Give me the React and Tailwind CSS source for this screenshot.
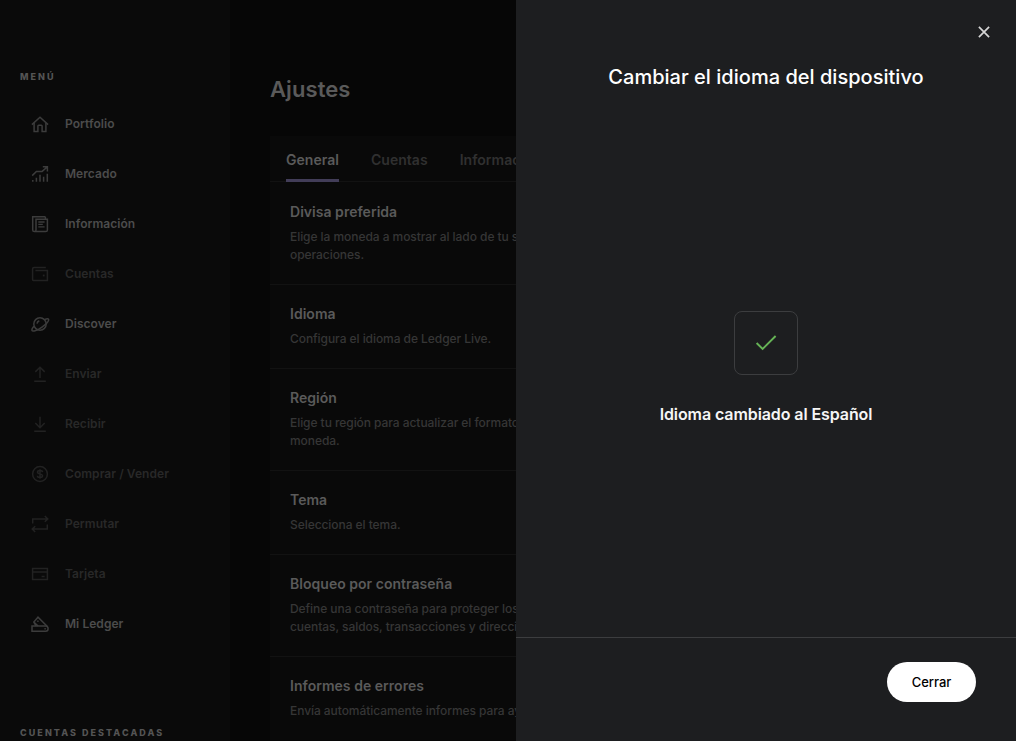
import React from "react";

function Icon({ children }) {
  return (
    <svg
      width="24"
      height="24"
      viewBox="0 0 24 24"
      fill="none"
      stroke="currentColor"
      strokeWidth="1.5"
      className="shrink-0"
    >
      {children}
    </svg>
  );
}

const icons = {
  home: (
    <>
      <path d="M3.9 12.6 12 5.3l8.1 7.3" />
      <path d="M6.1 10.8v8.6h3.8v-5.3q0-.9.9-.9h2.4q.9 0 .9.9v5.3h3.8v-8.6" />
    </>
  ),
  market: (
    <>
      <path d="M4.2 13.6 8.4 9.4h5.7L19.2 5M14.8 4.8h4.6v4.6" />
      <path d="M4.8 18v1.8M8.4 15.8v4M12 12.8v7M15.6 14.8v5M19.3 11.8v8" />
    </>
  ),
  news: (
    <>
      <path d="M17.4 4.8H4.7v13.1q0 1.6 1.7 1.6h11.3q1.7 0 1.7-1.6V7.3H8v10.6q0 1.4-1.4 1.6M17.4 4.8v2.5" />
      <path d="M10.3 10h6.3M10.3 12.4h4.5M10.3 14.8h6.3" strokeWidth="1.3" />
    </>
  ),
  wallet: (
    <>
      <path d="M17.8 5.6H6q-1.4 0-1.4 1.4v10.8q0 .6.6.6h14.2V8.6H7.4" />
      <path d="M14.8 13.5h1.8" strokeWidth="1.8" />
    </>
  ),
  planet: (
    <>
      <circle cx="12" cy="12" r="6.2" />
      <path d="M16.6 7.6c2.4-1.1 4.1-1.1 4.1.2 0 1.6-2.9 4.6-6.7 7.3-4 2.9-9.4 5.1-10 3.4-.4-1 .5-2.6 1.9-4.2" />
      <path d="M9 11.6q.2-2.1 2.3-2.9" />
    </>
  ),
  send: <path d="M12 16V5.3M7.3 9.9 12 5.2l4.7 4.7M6.2 19.3h11.6" />,
  receive: <path d="M12 4.8v10.8M7.3 11l4.7 4.7 4.7-4.7M6.2 19.3h11.6" />,
  dollar: (
    <>
      <circle cx="12" cy="12" r="7.4" />
      <path d="M14.6 10.1q-.2-1.7-2.6-1.7t-2.5 1.7q0 1.4 2.5 1.8t2.6 1.9q-.1 1.8-2.6 1.8t-2.6-1.8M12 7.2v9.6" />
    </>
  ),
  swap: (
    <>
      <path d="M4.7 11.4V6.9h15M16.8 4l3 2.9-3 2.9" />
      <path d="M19.3 12.6v4.5h-15M7.2 20l-3-2.9 3-2.9" />
    </>
  ),
  card: (
    <>
      <path d="M4.6 6.4h14.8v11.2H4.6zM4.6 10h14.8" />
      <path d="M13.6 14.5h3" />
    </>
  ),
  device: (
    <>
      <path d="M4 14h13.6q2.5.2 2.5 2.7t-2.5 2.6H4z" />
      <path d="M8 14 5.8 10 10 5.2l9.6 9.6M5.8 10l4.3 4" />
      <path d="M9.2 9.3h1.4M16.4 16.7h1.4" />
    </>
  ),
};

const menu = [
  ["Portfolio", "home", true],
  ["Mercado", "market", true],
  ["Información", "news", true],
  ["Cuentas", "wallet", false],
  ["Discover", "planet", true],
  ["Enviar", "send", false],
  ["Recibir", "receive", false],
  ["Comprar / Vender", "dollar", false],
  ["Permutar", "swap", false],
  ["Tarjeta", "card", false],
  ["Mi Ledger", "device", true],
];

const settings = [
  ["Divisa preferida", ["Elige la moneda a mostrar al lado de tu saldo y", "operaciones."]],
  ["Idioma", ["Configura el idioma de Ledger Live."]],
  ["Región", ["Elige tu región para actualizar el formato de", "moneda."]],
  ["Tema", ["Selecciona el tema."]],
  ["Bloqueo por contraseña", ["Define una contraseña para proteger los datos,", "cuentas, saldos, transacciones y direcciones."]],
  ["Informes de errores", ["Envía automáticamente informes para ayudar"]],
];

function Sidebar() {
  return (
    <aside className="flex w-[230px] shrink-0 flex-col bg-[#0a0a0a]">
      <h2 className="mt-[70px] h-[14px] pl-5 text-[9px] leading-[14px] font-extrabold tracking-[2.05px] text-[#545454]">
        MENÚ
      </h2>
      <nav className="mt-[15px] flex flex-col">
        {menu.map(([label, icon, active]) => (
          <div
            key={label}
            className={
              active
                ? "flex h-[50px] items-center gap-[13px] pl-7 text-[#3c3c3c]"
                : "flex h-[50px] items-center gap-[13px] pl-7 text-[#222222]"
            }
          >
            <Icon>{icons[icon]}</Icon>
            <span
              className={
                active
                  ? "text-[12px] leading-[18px] font-semibold tracking-[0.05px] text-[#4c4c4c]"
                  : "text-[12px] leading-[18px] font-semibold tracking-[0.05px] text-[#282828]"
              }
            >
              {label}
            </span>
          </div>
        ))}
      </nav>
      <h2 className="mt-[77px] pl-5 text-[9px] leading-[14px] font-extrabold tracking-[2.05px] whitespace-nowrap text-[#545454]">
        CUENTAS DESTACADAS
      </h2>
    </aside>
  );
}

function Settings() {
  return (
    <main className="w-[286px] shrink-0 overflow-hidden bg-[#060606] pl-10">
      <h1 className="mt-[75px] h-[61px] text-[22px] leading-[28px] font-semibold tracking-[0.08px] text-[#5a5a5a]">
        Ajustes
      </h1>
      <section className="w-[700px] bg-[#090909]">
        <div className="flex h-[46px] gap-8 border-b border-[#121212] px-4 text-[14px] font-semibold tracking-[0.03px] text-[#303030]">
          <span className="-mb-px flex items-center border-b-[3px] border-[#423d58] pt-[3px] text-[#5a5a5a]">
            General
          </span>
          <span className="flex items-center pt-[2px]">Cuentas</span>
          <span className="flex items-center pt-[2px]">Información</span>
        </div>
        {settings.map(([title, lines], i) => (
          <div
            key={title}
            className={
              i === 0 ? "px-5 py-5" : "border-t border-[#121212] px-5 pt-[19px] pb-5"
            }
          >
            <h3 className="mb-1.5 text-[14px] leading-5 font-semibold tracking-[0.03px] text-[#5a5a5a]">
              {title}
            </h3>
            {lines.map((line) => (
              <p
                key={line}
                className="text-[12px] leading-[18px] font-medium tracking-[-0.06px] whitespace-nowrap text-[#363636]"
              >
                {line}
              </p>
            ))}
          </div>
        ))}
      </section>
    </main>
  );
}

function Drawer() {
  return (
    <section className="flex w-[500px] shrink-0 flex-col bg-[#1d1e20]">
      <div className="flex h-16 items-center justify-end pr-[22px]">
        <button aria-label="Cerrar" className="flex h-5 w-5 items-center justify-center">
          <svg width="20" height="20" viewBox="0 0 20 20" fill="none" stroke="#d6d6d6" strokeWidth="1.7">
            <path d="M4.9 4.9 15.1 15.1M15.1 4.9 4.9 15.1" />
          </svg>
        </button>
      </div>
      <h2 className="text-center text-[20px] leading-[26px] font-medium tracking-[0.02px] text-white">
        Cambiar el idioma del dispositivo
      </h2>
      <div className="flex flex-1 flex-col items-center pt-[221px]">
        <div className="flex h-16 w-16 items-center justify-center rounded-lg border border-[#3c3d3f]">
          <svg width="24" height="24" viewBox="0 0 24 24" fill="none" stroke="#66b456" strokeWidth="1.9">
            <path d="M2.6 12 8.6 18 21.6 5" />
          </svg>
        </div>
        <p className="mt-7 text-[16px] leading-[22px] font-semibold tracking-[-0.09px] text-[#f5f5f5]">
          Idioma cambiado al Español
        </p>
      </div>
      <footer className="flex h-[104px] items-start justify-end border-t border-[#3c3d3f] pt-6 pr-10">
        <button className="h-10 w-[89px] rounded-full bg-white pt-0.5 text-[13px] font-medium text-black">
          Cerrar
        </button>
      </footer>
    </section>
  );
}

export default function App() {
  return (
    <div className="flex h-[741px] w-[1016px] overflow-hidden bg-[#060606] font-['Inter',sans-serif]">
      <Sidebar />
      <Settings />
      <Drawer />
    </div>
  );
}
